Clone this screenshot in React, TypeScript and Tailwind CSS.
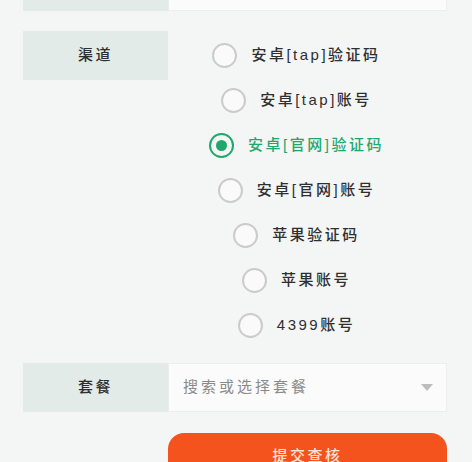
import { useState } from 'react';

const CHANNELS = ['安卓[tap]验证码', '安卓[tap]账号', '安卓[官网]验证码', '安卓[官网]账号', '苹果验证码', '苹果账号', '4399账号'];

function Radio({ checked }: { checked: boolean }) {
  return (
    <span
      className={`shrink-0 w-[25px] h-[25px] rounded-full border-2 flex items-center justify-center ${
        checked ? 'border-[#1ea86c]' : 'border-[#cbcbcb] bg-[#fafafa]'
      }`}
    >
      {checked && <span className="w-[11px] h-[11px] rounded-full bg-[#1ea86c]" />}
    </span>
  );
}

export default function App() {
  const [channel, setChannel] = useState(2);

  return (
    <div className="min-h-screen bg-[#f4f5f5] pl-[23px] pr-[25px] font-['Liberation_Sans','Noto_Sans_CJK_SC',sans-serif] text-[15px] font-medium tracking-[2.5px] text-[#2f2f2f] overflow-hidden">
      {/* previous row, scrolled mostly out of view */}
      <div className="flex h-[49px] -mt-[38px]">
        <div className="w-[145px] bg-[#e3ebe8]" />
        <div className="flex-1 bg-[#fbfbfb] border border-[#eceeee]" />
      </div>

      <div className="flex mt-[20px]">
        <div className="w-[145px] h-[49px] bg-[#e3ebe8] flex items-center justify-center shrink-0">渠道</div>
        <div className="flex-1 flex flex-col items-center pt-[2px] pr-[22px]">
          {CHANNELS.map((name, i) => (
            <button
              key={name}
              onClick={() => setChannel(i)}
              className={`h-[45px] flex items-center gap-[14px] ${i === channel ? 'text-[#1ea86c]' : 'text-[#2f2f2f]'}`}
            >
              <Radio checked={i === channel} />
              <span>{name}</span>
            </button>
          ))}
        </div>
      </div>

      <div className="flex h-[49px] mt-[15px]">
        <div className="w-[145px] bg-[#e3ebe8] flex items-center justify-center shrink-0">套餐</div>
        <div className="flex-1 bg-[#fbfbfb] border border-[#eceeee] flex items-center pl-[14px] pr-[13px]">
          <span className="flex-1 text-[#8a8a8a] font-normal tracking-[3px]">搜索或选择套餐</span>
          <svg width="12" height="7" viewBox="0 0 12 7">
            <path d="M0 0 L12 0 L6 7 Z" fill="#bdbdbd" />
          </svg>
        </div>
      </div>

      <div className="ml-[145px] mt-[21px] h-[46px] rounded-[16px] bg-[#f5531e] text-[#fbe3d8] flex items-center justify-center">
        提交查核
      </div>
    </div>
  );
}
